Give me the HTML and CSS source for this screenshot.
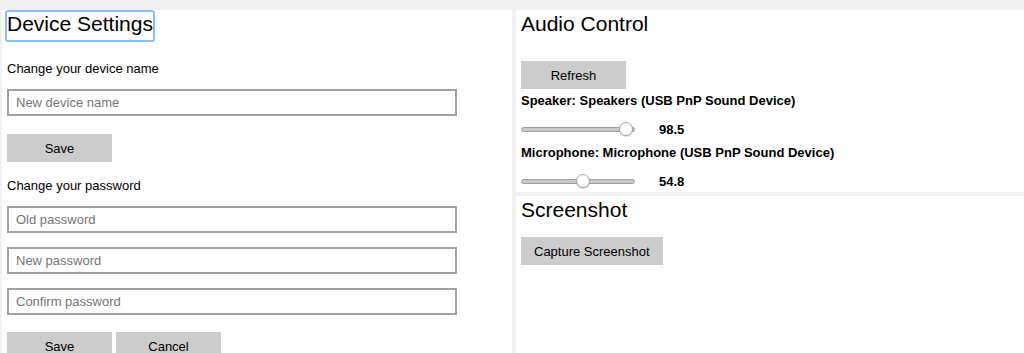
FILE: index.html
```html
<!DOCTYPE html>
<html lang="en">
<head>
    <meta charset="UTF-8">
    <meta name="viewport" content="width=device-width, initial-scale=1.0">
    <title>Device Settings</title>
    <link rel="stylesheet" href="styles.css">
</head>
<body>

    <div class="panel settings-panel">
        <h2 class="panel-title focused" tabindex="-1">Device Settings</h2>

        <form class="group name-group" id="nameForm">
            <label for="deviceName">Change your device name</label>
            <input type="text" id="deviceName" class="field first" placeholder="New device name">
            <button type="submit" class="btn save-name">Save</button>
        </form>

        <form class="group password-group" id="passwordForm">
            <label for="oldPassword">Change your password</label>
            <input type="password" id="oldPassword" class="field first" placeholder="Old password">
            <input type="password" id="newPassword" class="field" placeholder="New password">
            <input type="password" id="confirmPassword" class="field" placeholder="Confirm password">
            <div class="button-row">
                <button type="submit" class="btn">Save</button>
                <button type="reset" class="btn">Cancel</button>
            </div>
        </form>
    </div>

    <div class="side-column">
        <div class="panel audio-panel">
            <h2 class="panel-title">Audio Control</h2>
            <button class="btn refresh-btn" id="refreshButton">Refresh</button>

            <div class="device-label">Speaker: Speakers (USB PnP Sound Device)</div>
            <div class="volume-row">
                <input type="range" class="volume" min="0" max="100" step="0.1" value="98.5">
                <span class="volume-value">98.5</span>
            </div>

            <div class="device-label">Microphone: Microphone (USB PnP Sound Device)</div>
            <div class="volume-row">
                <input type="range" class="volume" min="0" max="100" step="0.1" value="54.8">
                <span class="volume-value">54.8</span>
            </div>
        </div>

        <div class="panel screenshot-panel">
            <h2 class="panel-title">Screenshot</h2>
            <button class="btn capture-btn" id="captureButton">Capture Screenshot</button>
        </div>
    </div>

</body>
</html>
```

FILE: styles.css
```css
/* General */
* {
    box-sizing: border-box;
}

body {
    font-family: "Liberation Sans", Arial, sans-serif;
    font-size: 13px;
    color: #000;
    margin: 0;
    padding: 10px 0 0 2px;
    min-height: 100vh;
    background: #f1f1f1;
    display: grid;
    grid-template-columns: 510px 1fr;
    column-gap: 4px;
}

.panel {
    background: #fff;
    padding: 0 5px;
    display: flex;
    flex-direction: column;
    align-items: flex-start;
}

.panel-title {
    margin: 0 0 0 -2px;
    font-size: 21px;
    font-weight: normal;
    line-height: 24px;
    padding: 0 0 4px 0;
    border: 2px solid transparent;
    border-radius: 3px;
}

.panel-title.focused {
    border-color: #8ebcf4;
    outline: none;
}

/* Forms */
.group {
    display: flex;
    flex-direction: column;
    align-items: flex-start;
    width: 100%;
    margin: 0;
}

.name-group {
    margin-top: 19px;
}

.password-group {
    margin-top: 16px;
}

label {
    line-height: 15px;
}

.field {
    width: 90%;
    height: 27px;
    margin-top: 14px;
    padding: 0 7px;
    font-family: inherit;
    font-size: 13px;
    border: 2px solid #a2a2a2;
    background: #fff;
    outline: none;
}

.field.first {
    margin-top: 13px;
}

.field::placeholder {
    color: #757575;
}

.btn {
    min-width: 105px;
    height: 28px;
    padding: 0 13px;
    font-family: inherit;
    font-size: 13px;
    color: #000;
    background: #cccccc;
    border: none;
    cursor: pointer;
}

.save-name {
    margin-top: 18px;
}

.button-row {
    display: flex;
    gap: 4px;
    margin-top: 17px;
}

/* Right column */
.side-column {
    display: flex;
    flex-direction: column;
    gap: 4px;
}

.audio-panel {
    padding-bottom: 3px;
}

.refresh-btn {
    margin-top: 19px;
}

.device-label {
    font-weight: bold;
    line-height: 15px;
    margin-top: 4px;
}

.volume-row + .device-label {
    margin-top: 8px;
}

.volume-row {
    display: flex;
    align-items: center;
    height: 16px;
    margin-top: 13px;
}

.volume-value {
    font-weight: bold;
    margin-left: 24px;
}

.volume {
    -webkit-appearance: none;
    appearance: none;
    width: 114px;
    height: 16px;
    margin: 0;
    background: transparent;
}

.volume::-webkit-slider-runnable-track {
    height: 5px;
    background: #c9c9c9;
    border: 1px solid #a0a0a0;
    border-radius: 3px;
}

.volume::-webkit-slider-thumb {
    -webkit-appearance: none;
    width: 14px;
    height: 14px;
    margin-top: -6px;
    border-radius: 50%;
    background: #fff;
    border: 1px solid #a6a6a6;
    box-shadow: 0 1px 1px rgba(0, 0, 0, 0.15);
}

.screenshot-panel {
    flex: 1;
}

.capture-btn {
    margin-top: 9px;
}
```
